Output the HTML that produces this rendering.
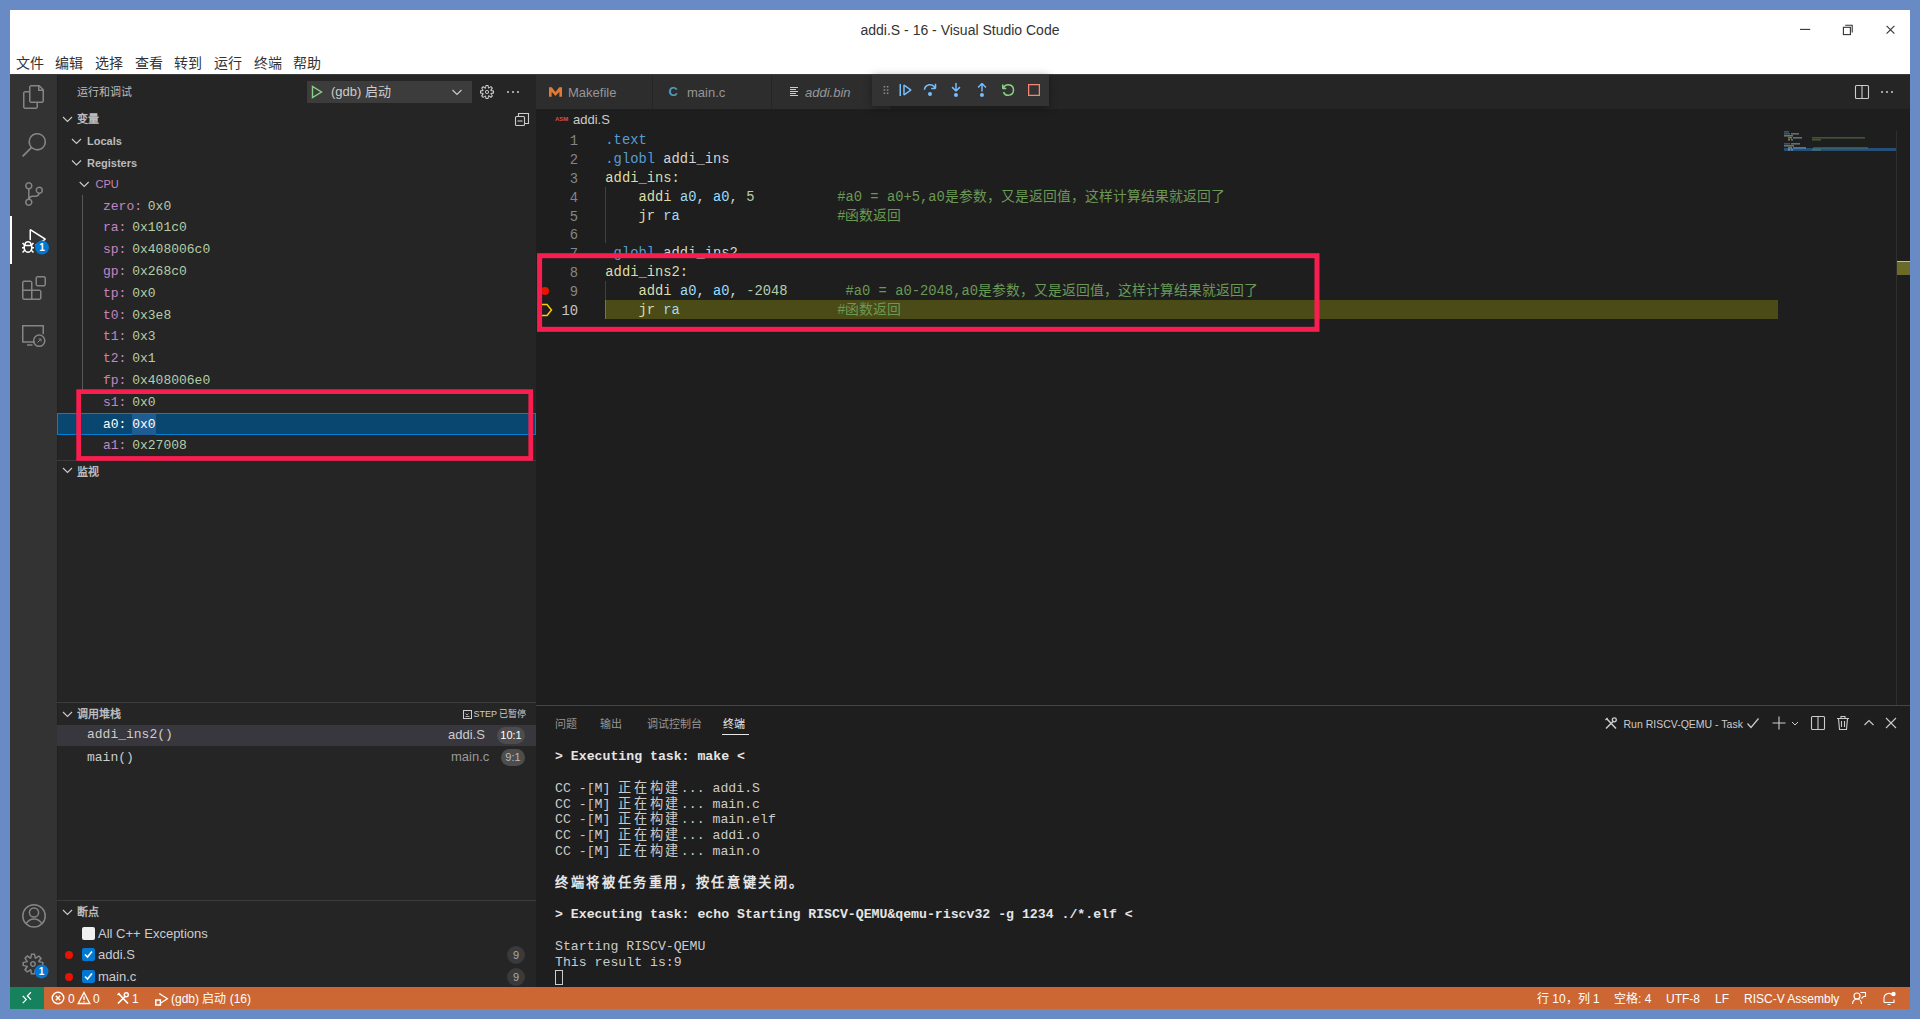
<!DOCTYPE html>
<html lang="zh-CN"><head><meta charset="utf-8">
<style>
*{margin:0;padding:0;box-sizing:border-box}
html,body{width:1920px;height:1019px;overflow:hidden;background:#688bc5;font-family:"Liberation Sans",sans-serif}
.a{position:absolute;white-space:pre}
.m{font-family:"Liberation Mono",monospace}
#title{left:10px;top:10px;width:1900px;height:64px;background:#fff}
#act{left:10px;top:74px;width:47px;height:913px;background:#333}
#side{left:57px;top:74px;width:479px;height:913px;background:#252526}
#tabs{left:536px;top:74px;width:1374px;height:35px;background:#252526}
#editor{left:536px;top:109px;width:1374px;height:596px;background:#1e1e1e}
#panel{left:536px;top:705px;width:1374px;height:282px;background:#1e1e1e;border-top:1px solid #454545}
#status{left:10px;top:987px;width:1900px;height:22px;background:#cc6633}
.menu{top:53px;height:20px;line-height:20px;font-size:14px;color:#333}
.sh{font-size:11px;font-weight:bold;color:#bbb;height:22px;line-height:22px}
.row{font-size:13px;height:22px;line-height:22px}
.vn{color:#c586c0}.vv{color:#b5cea8}
.ln{font-size:13.8px;color:#858585;width:40px;text-align:right;height:19px;line-height:19px}
.cl{font-size:13.8px;height:18.8px;line-height:18.8px;color:#d4d4d4}
.dir{color:#569cd6}.lab{color:#dcdcaa}.reg{color:#9cdcfe}.num{color:#b5cea8}.cmt{color:#6a9955}
.cj{letter-spacing:2.63px}
.term{font-size:13.2px;color:#cccccc;height:16px;line-height:16px}
.st{font-size:12px;color:#fff;top:988px;height:22px;line-height:22px}
svg{position:absolute;overflow:visible}
</style></head><body>
<div class="a" id="title"></div>
<div class="a" style="left:0;top:20px;width:1920px;text-align:center;font-size:14px;color:#333;line-height:20px">addi.S - 16 - Visual Studio Code</div>
<!-- window controls -->
<svg style="left:1790px;top:15px" width="120" height="30" fill="none" stroke="#333" stroke-width="1.1">
 <path d="M10 14.4h10.2"/>
 <rect x="53.4" y="12.3" width="7" height="7.3"/><path d="M55.2 10.3h7v7.2"/>
 <path d="M96.6 10.9l7.8 7.8M104.4 10.9l-7.8 7.8"/>
</svg>
<div class="a menu" style="left:16px">文件</div>
<div class="a menu" style="left:55px">编辑</div>
<div class="a menu" style="left:95px">选择</div>
<div class="a menu" style="left:135px">查看</div>
<div class="a menu" style="left:174px">转到</div>
<div class="a menu" style="left:214px">运行</div>
<div class="a menu" style="left:254px">终端</div>
<div class="a menu" style="left:293px">帮助</div>

<div class="a" id="act"></div>
<div class="a" id="side"></div>
<div class="a" style="left:57px;top:74px;width:1px;height:913px;background:#202020"></div>

<!-- activity bar icons -->
<svg style="left:22px;top:85px" width="24" height="24" viewBox="0 0 24 24" fill="#858585"><path d="M17.5 0h-9L7 1.5V6H2.5L1 7.5v15.07L2.5 24h12.07L16 22.57V18h4.7l1.3-1.43V4.5L17.5 0zm0 2.12l2.38 2.38H17.5V2.12zm-3 20.38h-12v-15H7v9.07L8.5 18h6v4.5zm6-6h-12v-15H16V6h4.5v10.5z"/></svg>
<svg style="left:22px;top:133.4px" width="24" height="24" viewBox="0 0 24 24" fill="#858585"><path d="M15.25 0a8.750 8.750 0 0 0-6.8 14.26L0 22.71 1.29 24l8.45-8.46A8.75 8.75 0 1 0 15.25 0zm0 16a7.25 7.25 0 1 1 0-14.5 7.25 7.25 0 0 1 0 14.5z"/></svg>
<svg style="left:22px;top:181.8px" width="24" height="24" viewBox="0 0 24 24" fill="#858585"><path d="M21.007 8.222A3.738 3.738 0 0 0 15.045 5.2a3.737 3.737 0 0 0 1.156 6.583 2.988 2.988 0 0 1-2.668 1.67h-2.99a4.456 4.456 0 0 0-2.989 1.165V7.4a3.737 3.737 0 1 0-1.494 0v9.117a3.776 3.776 0 1 0 1.816.099 2.99 2.99 0 0 1 2.668-1.667h2.99a4.484 4.484 0 0 0 4.223-3.039 3.736 3.736 0 0 0 3.25-3.687zM4.565 3.738a2.242 2.242 0 1 1 4.484 0 2.242 2.242 0 0 1-4.484 0zm4.484 16.441a2.242 2.242 0 1 1-4.484 0 2.242 2.242 0 0 1 4.484 0zm8.221-9.715a2.242 2.242 0 1 1 0-4.485 2.242 2.242 0 0 1 0 4.485z"/></svg>
<div class="a" style="left:10px;top:216px;width:2px;height:48px;background:#fff"></div>
<svg style="left:22px;top:228.7px" width="24" height="24" viewBox="0 0 24 24" fill="#fff"><path d="M10.94 13.5l-1.32 1.32a3.73 3.73 0 0 0-7.24 0L1.06 13.5 0 14.56l1.72 1.72-.22.22V18H0v1.5h1.5v.08c.077.489.214.966.41 1.42L0 22.94 1.06 24l1.65-1.65A4.308 4.308 0 0 0 6 24a4.31 4.31 0 0 0 3.29-1.65L10.94 24 12 22.94 10.090 21c.198-.464.336-.951.41-1.45v-.1H12V18h-1.5v-1.5l-.22-.22L12 14.56l-1.06-1.06zM6 13.5a2.250 2.250 0 0 1 2.25 2.25h-4.5A2.25 2.25 0 0 1 6 13.5zm3 6a3.33 3.33 0 0 1-3 3 3.33 3.33 0 0 1-3-3v-2.25h6v2.25zm14.76-9.9v1.26L13.5 17.37V15.6l8.5-5.37L9 2v9.46a5.07 5.07 0 0 0-1.5-.72V.63L8.64 0l15.12 9.6z"/></svg>
<svg style="left:10px;top:74px" width="48" height="913">
 <circle cx="32" cy="173.6" r="7" fill="#0078d4"/>
 <text x="32" y="177.3" font-size="10" font-weight="bold" fill="#fff" text-anchor="middle" font-family="Liberation Sans">1</text>
</svg>
<svg style="left:22px;top:275.7px" width="24" height="24" viewBox="0 0 24 24" fill="#858585"><path d="M13.5 1.5L15 0h7.5L24 1.5V9l-1.5 1.5H15L13.5 9V1.5zm1.5 0V9h7.5V1.5H15zM0 15V6l1.5-1.5H9L10.5 6v7.5H18l1.5 1.5v7.5L18 24H1.5L0 22.5V15zm9-1.5V6H1.5v7.5H9zM9 15H1.5v7.5H9V15zm1.5 7.5H18V15h-7.5v7.5z"/></svg>
<svg style="left:10px;top:74px" width="48" height="913" fill="none" stroke="#858585" stroke-width="1.5">
 <path d="M25 268h-12.25v-16.25h20.5v8.5"/><path d="M17 271h5.5"/>
 <circle cx="29.2" cy="266.7" r="5.6"/><path d="M27.5 268.5l3.5-3.5M28.5 265h2.5v2.5" stroke-width="1"/>
 <circle cx="24" cy="841.9" r="11.2"/><circle cx="24" cy="838.5" r="4.6"/><path d="M16 850c2-3.5 4.5-5 8-5s6 1.5 8 5"/>
</svg>
<svg style="left:20.6px;top:951.9px" width="24" height="24" viewBox="0 0 16 16" fill="#858585"><path d="M9.1 4.4L8.6 2H7.4l-.5 2.4-.7.3-2-1.3-.9.8 1.3 2-.2.7-2.4.5v1.2l2.4.5.3.8-1.3 2 .8.8 2-1.3.8.3.4 2.300h1.2l.5-2.4.8-.3 2 1.3.8-.8-1.3-2 .3-.8 2.3-.4V7.4l-2.4-.5-.3-.8 1.3-2-.8-.8-2 1.3-.7-.2zM9.4 1l.5 2.4L12 2.1l2 2-1.4 2.1 2.4.4v2.8l-2.4.5L14 12l-2 2-2.1-1.4-.5 2.4H6.6l-.5-2.4L4 13.9l-2-2 1.4-2.1L1 9.4V6.6l2.4-.5L2.1 4l2-2 2.1 1.4.4-2.4h2.8zm.6 7c0 1.1-.9 2-2 2s-2-.9-2-2 .9-2 2-2 2 .9 2 2zM8 9c.6 0 1-.4 1-1s-.4-1-1-1-1 .4-1 1 .4 1 1 1z"/></svg>
<svg style="left:10px;top:74px" width="48" height="913">
 <circle cx="31.5" cy="897.4" r="7" fill="#0078d4"/>
 <text x="31.5" y="901" font-size="10" font-weight="bold" fill="#fff" text-anchor="middle" font-family="Liberation Sans">1</text>
</svg>
<!-- sidebar -->
<div class="a" style="left:77px;top:81.7px;height:20px;line-height:20px;font-size:11px;color:#bbb">运行和调试</div>
<div class="a" style="left:307px;top:81px;width:165px;height:22px;background:#3c3c3c"></div>
<svg style="left:307px;top:81px" width="165" height="22" fill="none">
 <path d="M5.5 5.5v11l9-5.5z" stroke="#89d185" stroke-width="1.4"/>
 <path d="M145.5 9l4.5 4.5 4.5-4.5" stroke="#ccc" stroke-width="1.1"/>
</svg>
<div class="a" style="left:331px;top:81px;height:22px;line-height:22px;font-size:13px;color:#ccc">(gdb) 启动</div>
<svg style="left:479px;top:83.5px" width="16" height="16" viewBox="0 0 16 16" fill="#ccc"><path d="M9.1 4.4L8.6 2H7.4l-.5 2.4-.7.3-2-1.3-.9.8 1.3 2-.2.7-2.4.5v1.2l2.4.5.3.8-1.3 2 .8.8 2-1.3.8.3.4 2.3h1.2l.5-2.4.8-.3 2 1.3.8-.8-1.3-2 .3-.8 2.3-.4V7.4l-2.4-.5-.3-.8 1.3-2-.8-.8-2 1.3-.7-.2zM9.4 1l.5 2.4L12 2.1l2 2-1.4 2.1 2.4.4v2.8l-2.4.5L14 12l-2 2-2.1-1.4-.5 2.4H6.6l-.5-2.4L4 13.9l-2-2 1.4-2.1L1 9.4V6.6l2.4-.5L2.1 4l2-2 2.1 1.4.4-2.4h2.8zm.6 7c0 1.1-.9 2-2 2s-2-.9-2-2 .9-2 2-2 2 .9 2 2zM8 9c.6 0 1-.4 1-1s-.4-1-1-1-1 .4-1 1 .4 1 1 1z"/></svg>
<svg style="left:505px;top:84px" width="16" height="16" fill="#ccc"><circle cx="3" cy="8" r="1"/><circle cx="8" cy="8" r="1"/><circle cx="13" cy="8" r="1"/></svg>
<!-- variables header -->
<svg style="left:58px;top:108px" width="478" height="600" fill="none" stroke="#ccc" stroke-width="1.1">
 <path d="M5 9l4.5 4.5 4.5-4.5"/>
 <path d="M14 31l4.5 4.5 4.5-4.5"/>
 <path d="M14 52.5l4.5 4.5 4.5-4.5"/>
 <path d="M21.7 74l4.5 4.5 4.5-4.5"/>
 <path d="M5 360l4.5 4.5 4.5-4.5"/>
</svg>
<svg style="left:514px;top:112px" width="16" height="16" fill="none" stroke="#ccc" stroke-width="1.1">
 <rect x="1.5" y="4.5" width="9" height="9" rx="1"/><path d="M4.5 4.5v-3h10v10h-3.5"/><path d="M3.5 9h5"/>
</svg>
<div class="a sh" style="left:77px;top:108px">变量</div>
<div class="a sh" style="left:87px;top:130px">Locals</div>
<div class="a sh" style="left:87px;top:151.5px">Registers</div>
<div class="a" style="left:95.5px;top:173px;height:22px;line-height:22px;font-size:11px;color:#c586c0">CPU</div>
<div class="a" style="left:82px;top:195px;width:1px;height:195px;background:#585858"></div>
<div class="a" style="left:57px;top:413px;width:479px;height:22px;background:#094771;border:1px solid #007fd4"></div>
<div class="a row m" style="left:103px;top:195.50px"><span class="vn">zero:</span><span class="vv" style="margin-left:5.8px">0x0</span></div>
<div class="a row m" style="left:103px;top:217.30px"><span class="vn">ra:</span><span class="vv" style="margin-left:5.8px">0x101c0</span></div>
<div class="a row m" style="left:103px;top:239.10px"><span class="vn">sp:</span><span class="vv" style="margin-left:5.8px">0x408006c0</span></div>
<div class="a row m" style="left:103px;top:260.90px"><span class="vn">gp:</span><span class="vv" style="margin-left:5.8px">0x268c0</span></div>
<div class="a row m" style="left:103px;top:282.70px"><span class="vn">tp:</span><span class="vv" style="margin-left:5.8px">0x0</span></div>
<div class="a row m" style="left:103px;top:304.50px"><span class="vn">t0:</span><span class="vv" style="margin-left:5.8px">0x3e8</span></div>
<div class="a row m" style="left:103px;top:326.30px"><span class="vn">t1:</span><span class="vv" style="margin-left:5.8px">0x3</span></div>
<div class="a row m" style="left:103px;top:348.10px"><span class="vn">t2:</span><span class="vv" style="margin-left:5.8px">0x1</span></div>
<div class="a row m" style="left:103px;top:369.90px"><span class="vn">fp:</span><span class="vv" style="margin-left:5.8px">0x408006e0</span></div>
<div class="a row m" style="left:103px;top:391.70px"><span class="vn">s1:</span><span class="vv" style="margin-left:5.8px">0x0</span></div>
<div class="a row m" style="left:103px;top:413.50px;color:#fff">a0:<span style="margin-left:5.8px;background:#1d5d92;display:inline-block;height:21px">0x0</span></div>
<div class="a row m" style="left:103px;top:435.30px"><span class="vn">a1:</span><span class="vv" style="margin-left:5.8px">0x27008</span></div>
<div class="a" style="left:57px;top:460px;width:479px;height:1px;background:#3c3c3c"></div>
<div class="a sh" style="left:77px;top:461px">监视</div>
<div class="a" style="left:57px;top:702px;width:479px;height:1px;background:#3c3c3c"></div>
<svg style="left:58px;top:703px" width="478" height="22" fill="none" stroke="#ccc" stroke-width="1.1"><path d="M5 9l4.5 4.5 4.5-4.5"/></svg>
<div class="a sh" style="left:77px;top:703px">调用堆栈</div>
<svg style="left:462px;top:709px" width="10" height="10" fill="none" stroke="#ccc" stroke-width="1"><rect x="1.5" y="1.5" width="8" height="8"/><path d="M3.5 4.5l1.5 1.5 1.5-1.5M3.5 7.5h4" stroke-width=".8"/></svg><div class="a" style="left:473.5px;top:703px;height:22px;line-height:22px;font-size:9px;color:#ccc">STEP 已暂停</div>
<div class="a" style="left:57px;top:724.5px;width:479px;height:21.5px;background:#37373d"></div>
<div class="a row m" style="left:87px;top:724px;color:#ccc">addi_ins2()</div>
<div class="a row" style="left:448px;top:724px;color:#ccc">addi.S</div>
<div class="a" style="left:497px;top:727px;width:28px;height:17px;border-radius:9px;background:#4d4d4d;color:#fff;font-size:11px;line-height:17px;text-align:center">10:1</div>
<div class="a row m" style="left:87px;top:746.5px;color:#ccc">main()</div>
<div class="a row" style="left:451px;top:746px;color:#999">main.c</div>
<div class="a" style="left:501px;top:749px;width:24px;height:17px;border-radius:9px;background:#4d4d4d;color:#bbb;font-size:11px;line-height:17px;text-align:center">9:1</div>
<div class="a" style="left:57px;top:900px;width:479px;height:1px;background:#3c3c3c"></div>
<svg style="left:58px;top:901px" width="478" height="22" fill="none" stroke="#ccc" stroke-width="1.1"><path d="M5 9l4.5 4.5 4.5-4.5"/></svg>
<div class="a sh" style="left:77px;top:901px">断点</div>
<div class="a" style="left:82px;top:927px;width:13px;height:13px;background:#f0f0f0;border-radius:2px"></div>
<div class="a row" style="left:98px;top:922.5px;color:#ccc">All C++ Exceptions</div>
<div class="a" style="left:65px;top:951px;width:8px;height:8px;border-radius:50%;background:#e51400"></div>
<div class="a" style="left:82px;top:948px;width:13px;height:13px;background:#0078d4;border-radius:2px"></div>
<svg style="left:82px;top:948px" width="13" height="13" fill="none" stroke="#fff" stroke-width="1.6"><path d="M3 6.5l2.5 2.5 4.5-5.5"/></svg>
<div class="a row" style="left:98px;top:944px;color:#ccc">addi.S</div>
<div class="a" style="left:507px;top:946px;width:18px;height:18px;border-radius:50%;background:#3a3a3a;color:#aaa;font-size:11px;line-height:18px;text-align:center">9</div>
<div class="a" style="left:65px;top:973px;width:8px;height:8px;border-radius:50%;background:#e51400"></div>
<div class="a" style="left:82px;top:970px;width:13px;height:13px;background:#0078d4;border-radius:2px"></div>
<svg style="left:82px;top:970px" width="13" height="13" fill="none" stroke="#fff" stroke-width="1.6"><path d="M3 6.5l2.5 2.5 4.5-5.5"/></svg>
<div class="a row" style="left:98px;top:966px;color:#ccc">main.c</div>
<div class="a" style="left:507px;top:968px;width:18px;height:18px;border-radius:50%;background:#3a3a3a;color:#aaa;font-size:11px;line-height:18px;text-align:center">9</div>
<!-- red box -->
<svg style="left:0;top:0" width="1920" height="1019"><rect x="78.65" y="391.65" width="452.1" height="66.8" fill="none" stroke="#fa1e50" stroke-width="4.7"/></svg>
<div class="a" id="tabs"></div>
<div class="a" id="editor"></div>
<div class="a" id="panel"></div>

<!-- tabs -->
<div class="a" style="left:536px;top:74px;width:116px;height:35px;background:#2d2d2d"></div>
<div class="a" style="left:653px;top:74px;width:118px;height:35px;background:#2d2d2d"></div>
<div class="a" style="left:772px;top:74px;width:118px;height:35px;background:#2d2d2d"></div>
<svg style="left:549.3px;top:86.5px" width="13" height="10" viewBox="0 0 12.4 9" fill="#e37933"><path d="M0 9V0h2.6l3.6 4.6 3.6-4.6h2.6v9H9.9V4.2L6.2 8.2 2.5 4.2V9z"/></svg>
<div class="a" style="left:568px;top:82.5px;height:20px;line-height:20px;font-size:13px;color:#969696">Makefile</div>
<div class="a" style="left:668.5px;top:81.5px;height:20px;line-height:20px;font-size:13px;font-weight:bold;color:#519aba">C</div>
<div class="a" style="left:687px;top:82.5px;height:20px;line-height:20px;font-size:13px;color:#969696">main.c</div>
<svg style="left:789px;top:86px" width="10" height="10" stroke="#ccc" stroke-width="1"><path d="M1 1.5h8M1 3.5h6M1 5.5h8M1 7.5h6M1 9.5h8"/></svg>
<div class="a" style="left:805px;top:82.5px;height:20px;line-height:20px;font-size:13px;font-style:italic;color:#969696">addi.bin</div>
<!-- debug toolbar -->
<div class="a" style="left:872px;top:74px;width:177px;height:32px;background:#333333;box-shadow:0 2px 8px rgba(0,0,0,.36)"></div>
<svg style="left:878.4px;top:81.6px" width="16" height="16" viewBox="0 0 16 16" fill="#8c8c8c"><path d="M5 3h2v2H5zm0 4h2v2H5zm0 4h2v2H5zm4-8h2v2H9zm0 4h2v2H9zm0 4h2v2H9z" transform="translate(8 8) scale(.8) translate(-8 -8)"/></svg>
<svg style="left:896.7px;top:81.6px" width="16" height="16" viewBox="0 0 16 16" fill="#75beff"><path d="M2.5 2H4v12H2.5V2zm4.936.39L6.25 3v10l1.186.61 7-5V7.39l-7-5zM12.71 8l-4.96 3.543V4.457L12.71 8z"/></svg>
<svg style="left:922.4px;top:81.6px" width="16" height="16" viewBox="0 0 16 16" fill="#75beff"><path d="M14.25 5.75v-4h-1.5v2.542c-1.145-1.359-2.911-2.209-4.84-2.209-3.177 0-5.92 2.307-6.16 5.398l-.02.269h1.501l.022-.226c.212-2.195 2.202-3.94 4.656-3.94 1.736 0 3.244.875 4.050 2.166h-2.83v1.5h4.163l.962-.975V5.75h-.004zM8 14a2 2 0 1 0 0-4 2 2 0 0 0 0 4z"/></svg>
<svg style="left:948.1px;top:81.6px" width="16" height="16" viewBox="0 0 16 16" fill="#75beff"><path d="M8 9.532h.542l3.905-3.905-1.061-1.060-2.637 2.610V1H7.251v6.177l-2.637-2.610-1.061 1.060 3.905 3.905H8zm1.956 3.481a2 2 0 1 1-4 0 2 2 0 0 1 4 0z"/></svg>
<svg style="left:973.9px;top:81.6px" width="16" height="16" viewBox="0 0 16 16" fill="#75beff"><path d="M8 1h-.542L3.553 4.905l1.061 1.060 2.637-2.610v6.177h1.498V3.355l2.637 2.610 1.061-1.060L8.542 1H8zm1.956 12.013a2 2 0 1 1-4 0 2 2 0 0 1 4 0z"/></svg>
<svg style="left:999.6px;top:81.6px" width="16" height="16" viewBox="0 0 16 16" fill="#89d185"><path d="M12.75 8a4.5 4.5 0 0 1-8.61 1.834l-1.391.565A6.001 6.001 0 0 0 14.25 8 6 6 0 0 0 3.5 4.334V2.5H2v4l.75.75h3.5v-1.5H4.352A4.5 4.5 0 0 1 12.75 8z"/></svg>
<svg style="left:1025.7px;top:81.6px" width="16" height="16" viewBox="0 0 16 16" fill="#f48771"><path d="M2 2v12h12V2H2zm10.75 10.75h-9.5v-9.5h9.5v9.5z"/></svg>
<!-- editor actions -->
<svg style="left:1854px;top:84px" width="16" height="16" fill="none" stroke="#ccc" stroke-width="1.1"><rect x="1.5" y="1.5" width="13" height="13" rx="1"/><path d="M8 1.5v13"/></svg>
<svg style="left:1879px;top:84px" width="16" height="16" fill="#ccc"><circle cx="3" cy="8" r="1"/><circle cx="8" cy="8" r="1"/><circle cx="13" cy="8" r="1"/></svg>
<!-- breadcrumbs -->
<div class="a" style="left:555px;top:115px;font-size:6px;font-weight:bold;color:#d74f4f;line-height:8px">ASM</div>
<div class="a" style="left:573px;top:110px;height:20px;line-height:20px;font-size:13px;color:#ccc">addi.S</div>
<!-- current line highlight -->
<div class="a" style="left:605px;top:300px;width:1173px;height:19px;background:#4b4b18"></div>
<!-- indent guides -->
<div class="a" style="left:605px;top:187px;width:1px;height:56px;background:#404040"></div>
<div class="a" style="left:605px;top:281px;width:1px;height:38px;background:#404040"></div>
<div class="a" style="left:605px;top:300px;width:1px;height:19px;background:#707070"></div>
<div class="a ln m" style="left:538px;top:132.30px;color:#858585">1</div>
<div class="a cl m" style="left:605.35px;top:132.30px"><span class="dir">.text</span></div>
<div class="a ln m" style="left:538px;top:151.12px;color:#858585">2</div>
<div class="a cl m" style="left:605.35px;top:151.12px"><span class="dir">.globl</span> addi_ins</div>
<div class="a ln m" style="left:538px;top:169.94px;color:#858585">3</div>
<div class="a cl m" style="left:605.35px;top:169.94px"><span class="lab">addi_ins:</span></div>
<div class="a ln m" style="left:538px;top:188.76px;color:#858585">4</div>
<div class="a cl m" style="left:605.35px;top:188.76px">    <span class="lab">addi</span> <span class="reg">a0</span>, <span class="reg">a0</span>, <span class="num">5</span>          <span class="cmt">#a0 = a0+5,a0是参数，又是返回值，这样计算结果就返回了</span></div>
<div class="a ln m" style="left:538px;top:207.58px;color:#858585">5</div>
<div class="a cl m" style="left:605.35px;top:207.58px">    <span class="lab">jr</span> <span class="reg">ra</span>                   <span class="cmt">#函数返回</span></div>
<div class="a ln m" style="left:538px;top:226.40px;color:#858585">6</div>
<div class="a cl m" style="left:605.35px;top:226.40px"></div>
<div class="a ln m" style="left:538px;top:245.22px;color:#858585">7</div>
<div class="a cl m" style="left:605.35px;top:245.22px"><span class="dir">.globl</span> addi_ins2</div>
<div class="a ln m" style="left:538px;top:264.04px;color:#858585">8</div>
<div class="a cl m" style="left:605.35px;top:264.04px"><span class="lab">addi_ins2:</span></div>
<div class="a ln m" style="left:538px;top:282.86px;color:#858585">9</div>
<div class="a cl m" style="left:605.35px;top:282.86px">    <span class="lab">addi</span> <span class="reg">a0</span>, <span class="reg">a0</span>, <span class="num">-2048</span>       <span class="cmt">#a0 = a0-2048,a0是参数，又是返回值，这样计算结果就返回了</span></div>
<div class="a ln m" style="left:538px;top:301.68px;color:#c6c6c6">10</div>
<div class="a cl m" style="left:605.35px;top:301.68px">    <span class="lab">jr</span> <span class="reg">ra</span>                   <span class="cmt">#函数返回</span></div>

<div class="a" style="left:541px;top:286.5px;width:8px;height:8px;border-radius:50%;background:#e51400"></div>
<svg style="left:538px;top:302px" width="16" height="16" fill="none" stroke="#ffcc00" stroke-width="1.5"><path d="M4 2.5h5l4.5 5.5-4.5 5.5h-5"/></svg>
<!-- minimap -->
<div class="a" style="left:1784px;top:148px;width:112px;height:2.5px;background:#264f78"></div>
<svg style="left:1784px;top:131px" width="112" height="22"><g opacity=".45"><rect x="0" y="0" width="5" height="1.6" fill="#569cd6"/><rect x="0" y="2" width="6" height="1.6" fill="#569cd6"/><rect x="7" y="2" width="8" height="1.6" fill="#c8c8c8"/><rect x="0" y="4" width="9" height="1.6" fill="#dcdcaa"/><rect x="4" y="6" width="4" height="1.6" fill="#dcdcaa"/><rect x="9" y="6" width="8" height="1.6" fill="#9cdcfe"/><rect x="17" y="6" width="1" height="1.6" fill="#b5cea8"/><rect x="28" y="6" width="53" height="1.6" fill="#6a9955"/><rect x="4" y="8" width="2" height="1.6" fill="#dcdcaa"/><rect x="7" y="8" width="2" height="1.6" fill="#9cdcfe"/><rect x="28" y="8" width="9" height="1.6" fill="#6a9955"/><rect x="0" y="12" width="6" height="1.6" fill="#569cd6"/><rect x="7" y="12" width="9" height="1.6" fill="#c8c8c8"/><rect x="0" y="14" width="10" height="1.6" fill="#dcdcaa"/><rect x="4" y="16" width="4" height="1.6" fill="#dcdcaa"/><rect x="9" y="16" width="13" height="1.6" fill="#9cdcfe"/><rect x="29" y="16" width="55" height="1.6" fill="#6a9955"/><rect x="4" y="18" width="2" height="1.6" fill="#dcdcaa"/><rect x="7" y="18" width="2" height="1.6" fill="#9cdcfe"/><rect x="28" y="18" width="9" height="1.6" fill="#6a9955"/></g></svg>
<!-- scrollbar / overview ruler -->
<div class="a" style="left:1896px;top:131px;width:1px;height:574px;background:#2f2f2f"></div>
<div class="a" style="left:1897px;top:261px;width:13px;height:14px;background:#6b6b27"></div>
<div class="a" style="left:1897px;top:261px;width:13px;height:1px;background:#bbb"></div>

<!-- panel -->
<div class="a" style="left:555px;top:714px;height:20px;line-height:20px;font-size:11px;color:#969696">问题</div>
<div class="a" style="left:600px;top:714px;height:20px;line-height:20px;font-size:11px;color:#969696">输出</div>
<div class="a" style="left:647px;top:714px;height:20px;line-height:20px;font-size:11px;color:#969696">调试控制台</div>
<div class="a" style="left:723px;top:714px;height:20px;line-height:20px;font-size:11px;color:#e7e7e7">终端</div>
<div class="a" style="left:722px;top:734px;width:27px;height:1px;background:#e7e7e7"></div>
<svg style="left:1604px;top:716px" width="14" height="14" fill="none" stroke="#ccc" stroke-width="1.5"><path d="M2 12.5L9.5 5M2.5 2.5l9.5 10"/><circle cx="10.3" cy="3.8" r="2" stroke-width="1.3"/><path d="M1.5 4l2-2" stroke-width="1.3"/></svg>
<div class="a" style="left:1623.5px;top:713.5px;height:20px;line-height:20px;font-size:10.5px;color:#ccc">Run RISCV-QEMU - Task</div>
<svg style="left:1745px;top:715px" width="16" height="16" fill="none" stroke="#ccc" stroke-width="1.2"><path d="M2.5 8.5l3.5 4 7.5-9"/></svg>
<svg style="left:1771px;top:715px" width="16" height="16" fill="none" stroke="#ccc" stroke-width="1.1"><path d="M8 1.5v13M1.5 8h13"/></svg>
<svg style="left:1789px;top:715px" width="12" height="16" fill="none" stroke="#ccc" stroke-width="1"><path d="M3 7l3 3 3-3"/></svg>
<svg style="left:1810px;top:715px" width="16" height="16" fill="none" stroke="#ccc" stroke-width="1.1"><rect x="1.5" y="1.5" width="13" height="13" rx="1"/><path d="M8 1.5v13"/></svg>
<svg style="left:1835px;top:715px" width="16" height="16" fill="none" stroke="#ccc" stroke-width="1.1"><path d="M2 3.5h12M6 3.5v-2h4v2M3.5 3.5l1 11h7l1-11M6.5 6v6M9.5 6v6"/></svg>
<svg style="left:1861px;top:715px" width="16" height="16" fill="none" stroke="#ccc" stroke-width="1.1"><path d="M3.5 10l4.5-4.5 4.5 4.5"/></svg>
<svg style="left:1883px;top:715px" width="16" height="16" fill="none" stroke="#ccc" stroke-width="1.1"><path d="M3 3l10 10M13 3l-10 10"/></svg>
<div class="a term m" style="left:555px;top:749.10px"><b style="color:#e5e5e5">&gt; Executing task: make &lt;</b></div>
<div class="a term m" style="left:555px;top:780.76px">CC -[M] <span class="cj">正在构建</span>... addi.S</div>
<div class="a term m" style="left:555px;top:796.59px">CC -[M] <span class="cj">正在构建</span>... main.c</div>
<div class="a term m" style="left:555px;top:812.42px">CC -[M] <span class="cj">正在构建</span>... main.elf</div>
<div class="a term m" style="left:555px;top:828.25px">CC -[M] <span class="cj">正在构建</span>... addi.o</div>
<div class="a term m" style="left:555px;top:844.08px">CC -[M] <span class="cj">正在构建</span>... main.o</div>
<div class="a term m" style="left:555px;top:875.74px"><b style="color:#e5e5e5"><span class="cj">终端将被任务重用，按任意键关闭。</span></b></div>
<div class="a term m" style="left:555px;top:907.40px"><b style="color:#e5e5e5">&gt; Executing task: echo Starting RISCV-QEMU&amp;qemu-riscv32 -g 1234 ./*.elf &lt;</b></div>
<div class="a term m" style="left:555px;top:939.06px">Starting RISCV-QEMU</div>
<div class="a term m" style="left:555px;top:954.89px">This result is:9</div>
<div class="a" style="left:555px;top:970px;width:8px;height:15px;border:1px solid #ccc"></div>
<!-- red box editor -->
<svg style="left:0;top:0" width="1920" height="1019"><rect x="539.6" y="255.7" width="777.4" height="73.6" fill="none" stroke="#fa1e50" stroke-width="5"/></svg>

<div class="a" id="status"></div>

<!-- status bar -->
<div class="a" style="left:10px;top:987px;width:34px;height:22px;background:#16825d"></div>
<svg style="left:10px;top:987px" width="34" height="22" fill="none" stroke="#fff" stroke-width="1.3"><path d="M12.8 8.9l3.4 3.7-3.4 3.5M20.9 5.3l-3.5 3.6 3.5 3.7"/></svg>
<svg style="left:51px;top:991px" width="14" height="14" fill="none" stroke="#fff" stroke-width="1.4"><circle cx="7" cy="7" r="5.8"/><path d="M4.8 4.8l4.4 4.4M9.2 4.8l-4.4 4.4"/></svg>
<div class="a st" style="left:68px">0</div>
<svg style="left:77px;top:991px" width="14" height="14" fill="none" stroke="#fff" stroke-width="1.35"><path d="M7 1.5l5.8 11h-11.6z"/><path d="M7 5.5v3.5M7 10.3v1"/></svg>
<div class="a st" style="left:93px">0</div>
<svg style="left:116px;top:991px" width="14" height="14" fill="none" stroke="#fff" stroke-width="1.7"><path d="M2 12.5L9.5 5M2.5 2.5l9.5 10"/><circle cx="10.3" cy="3.8" r="2" stroke-width="1.4"/><path d="M1.5 4l2-2" stroke-width="1.4"/></svg>
<div class="a st" style="left:132px">1</div>
<svg style="left:153px;top:990px" width="18" height="18" fill="none" stroke="#fff" stroke-width="1.3"><path d="M6.2 3.5l8.2 5.3-7 4.4"/><rect x="2.8" y="10" width="4.6" height="5" stroke-width="1.5"/></svg>
<div class="a st" style="left:171px">(gdb) 启动 (16)</div>
<div class="a st" style="left:1537px">行 10，列 1</div>
<div class="a st" style="left:1614px">空格: 4</div>
<div class="a st" style="left:1666px">UTF-8</div>
<div class="a st" style="left:1715px">LF</div>
<div class="a st" style="left:1744px">RISC-V Assembly</div>
<svg style="left:1851px;top:990px" width="16" height="16" fill="none" stroke="#fff" stroke-width="1.1"><circle cx="6" cy="6" r="3"/><path d="M1.5 14c0-3 2-5 4.5-5s4.5 2 4.5 5M9.5 2.5h5v4h-2l-2 2"/></svg>
<svg style="left:1881px;top:990px" width="16" height="16" fill="none" stroke="#fff" stroke-width="1.1"><path d="M3 12.5v-5a5 5 0 0 1 9 -2M3 12.5h10v-3M6.5 14.5h3"/><circle cx="12.5" cy="4" r="2.2" fill="#fff" stroke="none"/></svg>


<div class="a" style="left:10px;top:74px;width:1900px;height:1px;background:#3a3a3a"></div>
</body></html>
